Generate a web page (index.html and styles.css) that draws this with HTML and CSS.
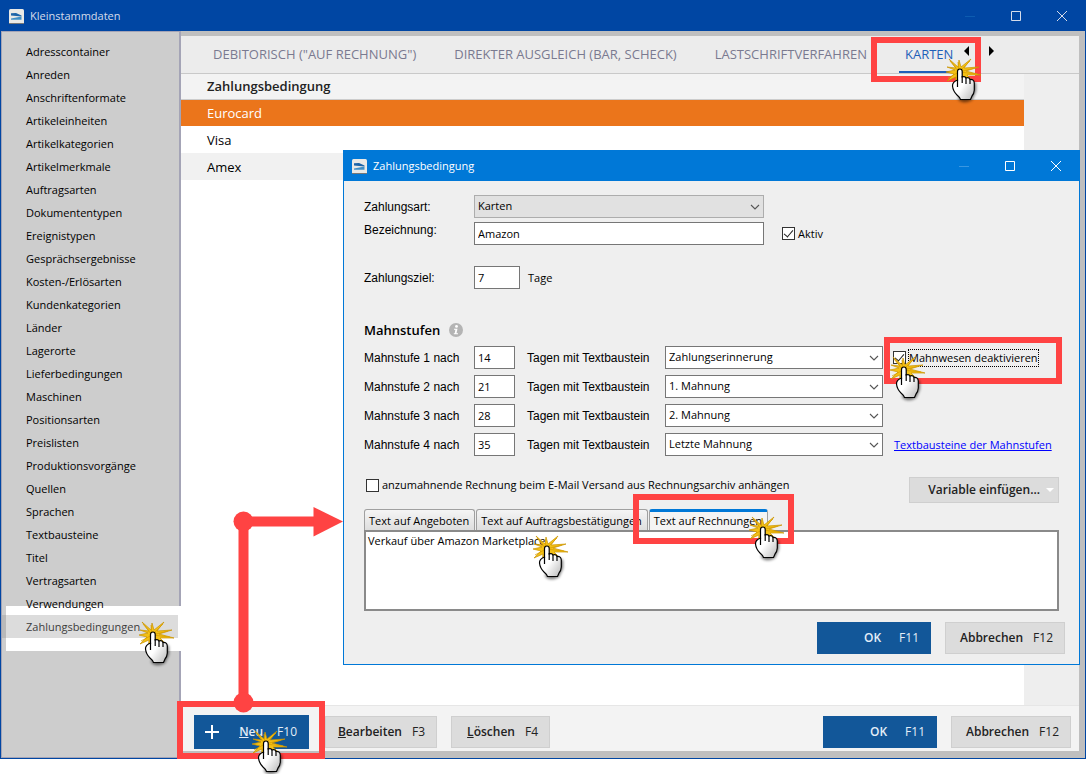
FILE: index.html
```html
<!DOCTYPE html>
<html lang="de">
<head>
<meta charset="utf-8">
<title>Kleinstammdaten</title>
<link rel="stylesheet" href="styles.css">
</head>
<body>
<svg class="defs" aria-hidden="true">
  <defs>
    <linearGradient id="skin" x1="0" y1="0" x2="1" y2="1"><stop offset=".5" stop-color="#fff"/><stop offset="1" stop-color="#b8b8b8"/></linearGradient>
    <filter id="soft" x="-30%" y="-30%" width="160%" height="170%"><feGaussianBlur stdDeviation="1.5"/></filter>
    <symbol id="logo" viewBox="0 0 15 15"><rect width="15" height="15" rx="1.5" fill="#e9e9e6"/><path d="M2 4.200l5-.2 5.500 2.500v1L2 6.500z" fill="#1c64a8"/><path d="M2 9.500l10.500-2v3.200H2z" fill="#3f8fc6"/><path d="M0 14.500h15" stroke="#777"/></symbol>
    <symbol id="chev" viewBox="0 0 10 6"><path d="M1 1l4 4 4-4" fill="none" stroke="#555" stroke-width="1.100"/></symbol>
    <g id="click">
      <path d="M12 41Q17 47 26 42L30 33V25L20 22z" fill="#000" opacity=".55" filter="url(#soft)"/>
      <path d="M3 1L12 9 13 2 15 9 25 1 18 10 33 9 20 13 35 17 21 17 26 22 14 17 9 28 10 19 1 23 8 16 0 14 9 12 1 9 10 10z" fill="#f3c016" stroke="#c99200" stroke-width=".7"/>
      <path d="M4 3l9 11L24 3M2 20l11-6 18 2M12 4l1 10 16-4" fill="none" stroke="#d9a000" stroke-width=".8"/>
      <path d="M11.500 23V13.500Q11.500 11 14 11Q16.200 11 16.200 13.500V19Q19 18 20 20Q23 19 24 21.500Q28 21 28.300 25V32Q28 36 26 38L24.500 41.500H14.500Q13.500 39 11 37Q7 33 6.500 28Q6.300 24 11.500 22z" fill="url(#skin)" stroke="#000" stroke-width="1.200"/>
      <path d="M11.500 22v7M16.200 18v7M20 20v6M24 21.500V26" fill="none" stroke="#000" stroke-width="1.200"/>
    </g>
  </defs>
</svg>
<div class="window">
  <header class="titlebar">
    <svg class="logo"><use href="#logo"/></svg><h1>Kleinstammdaten</h1>
    <div class="controls">
      <button type="button" aria-label="Minimieren" disabled><svg viewBox="0 0 10 10"><path d="M0 5.500h10"/></svg></button>
      <button type="button" aria-label="Maximieren"><svg viewBox="0 0 10 10"><path d="M.5.5h9v9h-9z"/></svg></button>
      <button type="button" aria-label="Schließen"><svg viewBox="0 0 10 10"><path d="M0 0l10 10M10 0L0 10"/></svg></button>
    </div>
  </header>
  <div class="body">
    <nav class="sidebar">
      <ul>
        <li>Adresscontainer</li><li>Anreden</li><li>Anschriftenformate</li><li>Artikeleinheiten</li><li>Artikelkategorien</li><li>Artikelmerkmale</li><li>Auftragsarten</li><li>Dokumententypen</li><li>Ereignistypen</li><li>Gesprächsergebnisse</li><li>Kosten-/Erlösarten</li><li>Kundenkategorien</li><li>Länder</li><li>Lagerorte</li><li>Lieferbedingungen</li><li>Maschinen</li><li>Positionsarten</li><li>Preislisten</li><li>Produktionsvorgänge</li><li>Quellen</li><li>Sprachen</li><li>Textbausteine</li><li>Titel</li><li>Vertragsarten</li><li>Verwendungen</li><li class="selected">Zahlungsbedingungen</li>
      </ul>
    </nav>
    <main class="content">
      <div class="tabs" role="tablist">
        <button type="button" role="tab">DEBITORISCH ("AUF RECHNUNG")</button>
        <button type="button" role="tab">DIREKTER AUSGLEICH (BAR, SCHECK)</button>
        <button type="button" role="tab">LASTSCHRIFTVERFAHREN</button>
        <button type="button" role="tab" class="active" aria-selected="true">KARTEN</button>
        <div class="arrows">
          <button type="button" aria-label="Zurück"><svg viewBox="0 0 5 10"><path d="M5 0v10L0 5z"/></svg></button>
          <button type="button" aria-label="Weiter"><svg viewBox="0 0 5 10"><path d="M0 0v10l5-5z"/></svg></button>
        </div>
      </div>
      <div class="list">
        <table>
          <thead><tr><th>Zahlungsbedingung</th></tr></thead>
          <tbody><tr class="current"><td>Eurocard</td></tr><tr><td>Visa</td></tr><tr class="alt"><td>Amex</td></tr></tbody>
        </table>
      </div>
      <footer class="actions">
        <button type="button" class="btn primary new"><svg viewBox="0 0 14 14"><path d="M7 0v14M0 7h14"/></svg><b><u>N</u>eu</b><span>F10</span></button>
        <button type="button" class="btn edit"><b><u>B</u>earbeiten</b><span>F3</span></button>
        <button type="button" class="btn delete"><b><u>L</u>öschen</b><span>F4</span></button>
        <button type="button" class="btn primary ok"><b>OK</b><span>F11</span></button>
        <button type="button" class="btn cancel"><b>Abbrechen</b><span>F12</span></button>
      </footer>
    </main>
  </div>

  <section class="dialog" role="dialog" aria-labelledby="dlg-title">
    <header class="titlebar">
      <svg class="logo"><use href="#logo"/></svg><h2 id="dlg-title">Zahlungsbedingung</h2>
      <div class="controls">
        <button type="button" aria-label="Minimieren" disabled><svg viewBox="0 0 10 10"><path d="M0 5.500h10"/></svg></button>
        <button type="button" aria-label="Maximieren"><svg viewBox="0 0 10 10"><path d="M.5.5h9v9h-9z"/></svg></button>
        <button type="button" aria-label="Schließen"><svg viewBox="0 0 10 10"><path d="M0 0l10 10M10 0L0 10"/></svg></button>
      </div>
    </header>
    <form>
      <div class="fields">
        <label for="art">Zahlungsart:</label>
        <span class="drop gray"><select id="art"><option>Karten</option></select><svg><use href="#chev"/></svg></span>
        <span></span>
        <label for="bez" class="top">Bezeichnung:</label>
        <input class="box" id="bez" type="text" value="Amazon">
        <label class="check"><input type="checkbox" checked><span>Aktiv</span></label>
      </div>
      <div class="target"><label for="ziel">Zahlungsziel:</label><input class="box" id="ziel" type="text" value="7"><span>Tage</span></div>
      <h3>Mahnstufen <svg viewBox="0 0 14 14" aria-hidden="true"><circle cx="7" cy="7" r="7" fill="#b4b4b4"/><circle cx="7.500" cy="3.400" r="1.400" fill="#fff"/><path d="M5 5.800h3.500l-1 4.500H9v1H4.800v-1h.9l.7-3.500H5z" fill="#fff"/></svg></h3>
      <div class="levels">
        <label for="t1">Mahnstufe 1 nach</label><input class="box" id="t1" type="text" value="14"><label for="s1">Tagen mit Textbaustein</label>
        <span class="drop"><select id="s1"><option>Zahlungserinnerung</option></select><svg><use href="#chev"/></svg></span>
        <label class="check focus"><input type="checkbox" checked><span>Mahnwesen deaktivieren</span></label>
        <label for="t2">Mahnstufe 2 nach</label><input class="box" id="t2" type="text" value="21"><label for="s2">Tagen mit Textbaustein</label>
        <span class="drop"><select id="s2"><option>1. Mahnung</option></select><svg><use href="#chev"/></svg></span>
        <span></span>
        <label for="t3">Mahnstufe 3 nach</label><input class="box" id="t3" type="text" value="28"><label for="s3">Tagen mit Textbaustein</label>
        <span class="drop"><select id="s3"><option>2. Mahnung</option></select><svg><use href="#chev"/></svg></span>
        <span></span>
        <label for="t4">Mahnstufe 4 nach</label><input class="box" id="t4" type="text" value="35"><label for="s4">Tagen mit Textbaustein</label>
        <span class="drop"><select id="s4"><option>Letzte Mahnung</option></select><svg><use href="#chev"/></svg></span>
        <a href="#textbausteine">Textbausteine der Mahnstufen</a>
      </div>
      <div class="attach">
        <label class="check"><input type="checkbox"><span>anzumahnende Rechnung beim E-Mail Versand aus Rechnungsarchiv anhängen</span></label>
        <button type="button" class="btn variable"><b>Variable einfügen...</b><svg viewBox="0 0 8 4"><path d="M0 0h8L4 4z"/></svg></button>
      </div>
      <div class="texttabs" role="tablist">
        <button type="button" role="tab">Text auf Angeboten</button><button type="button" role="tab">Text auf Auftragsbestätigungen</button><button type="button" role="tab" class="active" aria-selected="true">Text auf Rechnungen</button>
      </div>
      <textarea aria-label="Text auf Rechnungen">Verkauf über Amazon Marketplace</textarea>
      <div class="confirm">
        <button type="button" class="btn primary ok"><b>OK</b><span>F11</span></button>
        <button type="button" class="btn cancel"><b>Abbrechen</b><span>F12</span></button>
      </div>
    </form>
  </section>

  <svg class="marks" width="1086" height="774" viewBox="0 0 1086 774" aria-hidden="true">
    <g fill="none" stroke="#ff4343" stroke-width="6">
      <rect x="874" y="40" width="104" height="39"/>
      <rect x="887" y="340" width="172" height="41"/>
      <rect x="636" y="497" width="155" height="44"/>
      <rect x="180" y="704" width="142" height="52"/>
      <path d="M243.500 703V521.500H315" stroke-width="10"/>
    </g>
    <g fill="#ff4343"><circle cx="243.500" cy="521.500" r="10"/><circle cx="243.500" cy="702.500" r="10"/><path d="M313.500 507v29.500L343 521.500z"/></g>
    <use href="#click" x="946" y="58"/><use href="#click" x="890" y="356"/><use href="#click" x="533" y="535"/><use href="#click" x="749" y="516"/><use href="#click" x="139" y="621"/><use href="#click" x="252" y="730"/>
  </svg>
</div>
</body>
</html>
```
FILE: styles.css
```css
* { box-sizing: border-box; }
body { min-height: 100vh; margin: 0; background: #fff; color: #000; font: 11px/16px "Open Sans", "Noto Sans", sans-serif; }
button, input, select, textarea { font: inherit; color: inherit; margin: 0; border-radius: 0; }
button { border: 0; background: none; padding: 0; }
.defs { position: absolute; width: 0; height: 0; }

.window { position: relative; border: 1px solid #0046a3; background: #0046a3; }
.titlebar { display: flex; align-items: center; height: 30px; padding-left: 8px; color: #d5dcea; }
.titlebar h1, .titlebar h2 { margin: 0 0 0 6px; font-size: 11px; font-weight: 400; }
.logo { width: 15px; height: 15px; }
.controls { display: flex; margin-left: auto; }
.controls button { display: flex; align-items: center; justify-content: center; width: 46px; height: 30px; }
.controls svg { width: 10px; height: 10px; overflow: visible; }
.controls path { fill: none; stroke: #d5dcea; stroke-width: 1; }
.controls button:disabled path { stroke: #0d5cb0; }

.body { display: flex; background: #bfbfbf; }
.sidebar { flex: none; width: 180px; padding-top: 8px; background: #cdcdcd; border: 1px solid #a4a4b6; border-width: 1px 2px 1px 1px; }
.sidebar ul { margin: 0; padding: 0; list-style: none; }
.sidebar li { position: relative; z-index: 1; height: 23px; padding-left: 24px; line-height: 23px; white-space: nowrap; }
.sidebar .selected { z-index: 0; margin-right: 1px; background: #b9b9b9; color: #3c3c3c; }
.sidebar .selected::before { content: ""; position: absolute; z-index: -2; left: 4px; right: -4px; top: -9px; bottom: -13px; background: #fff; }
.sidebar .selected::after { content: ""; position: absolute; z-index: -1; inset: 0 0 0 4px; background: #dcdcdc; }

.content { flex: 1; min-width: 0; display: flex; flex-direction: column; margin: 5px 6px 7px 0; background: #eee; }
.tabs { display: flex; height: 38px; padding-left: 26px; border-bottom: 1px solid #c9c9c9; background: #ececec; font-size: 13px; }
.tabs > button { padding: 0 6px; margin-right: 26px; color: #7a7a90; white-space: nowrap; border-bottom: 2px solid transparent; }
.tabs > .active { margin: 0 5px 0 0; color: #1f5fb8; border-color: #1f5fb8; }
.arrows { display: flex; align-items: center; gap: 20px; padding-bottom: 8px; }
.arrows button { display: flex; }
.arrows svg { width: 5px; height: 10px; }
.list { height: 631px; margin-right: 55px; background: #fff; }
table { width: 100%; border-collapse: collapse; font-size: 13px; }
th, td { height: 27px; padding: 0 26px; text-align: left; font-weight: 400; }
th { height: 25px; background: #f3f3f3; border-bottom: 1px solid #ccc; color: #222; font-weight: 600; }
.current { background: #eb751b; color: #fff; }
.alt { background: #f1f1f1; }

.actions { display: flex; align-items: center; height: 46px; padding: 7px 8px 0 13px; background: #f3f3f3; border-top: 1px solid #e6e6e6; }
.btn { display: flex; align-items: center; justify-content: flex-end; gap: 10px; height: 32px; padding: 0 11px; border: 1px solid #cfcfcf; background: #dcdcdc; color: #222; font-size: 12px; white-space: nowrap; }
.btn b { font-weight: 600; }
.primary { background: #125799; border-color: #125799; color: #e4eef8; }
.new { width: 115px; height: 34px; padding-left: 10px; gap: 14px; }
.new svg { width: 14px; height: 14px; margin-right: auto; }
.new path { stroke: #fff; stroke-width: 2; }
.edit { width: 112px; margin-left: 16px; }
.delete { width: 99px; margin: 0 auto 0 14px; }
.ok { width: 114px; gap: 18px; }
.cancel { width: 120px; margin-left: 14px; }

.dialog { position: absolute; left: 342px; right: 5px; top: 149px; border: 1px solid #0078d7; background: #efefef; }
.dialog .titlebar { background: #0078d7; color: #fff; }
.dialog .controls path { stroke: #fff; }
.dialog .controls button:disabled path { stroke: #3997e2; }
form { padding: 14px 20px 10px; }
.fields, .levels { display: grid; align-items: center; }
.fields { grid-template-columns: 110px 290px 1fr; row-gap: 4px; }
.fields > label, .target label, .levels > label { font-family: "Liberation Sans", sans-serif; font-size: 12px; }
.fields .check, .levels .check { font-family: inherit; font-size: 11px; }
.fields .top { align-self: start; }
.box, .drop { height: 23px; border: 1px solid #767676; background: #fff; }
.box { width: 100%; padding: 0 3px 1px; }
.drop { position: relative; }
.drop select { width: 100%; height: 21px; padding: 0 20px 1px 3px; border: 0; background: none; appearance: none; }
.drop svg { position: absolute; right: 3px; top: 8px; width: 10px; height: 6px; pointer-events: none; }
.gray { border-color: #adadad; background: #e1e1e1; }
.check { display: inline-flex; align-items: center; gap: 3px; white-space: nowrap; }
.check input { position: relative; flex: none; width: 13px; height: 13px; appearance: none; border: 1px solid #333; background: #fff; }
.check input:checked::after { content: ""; position: absolute; left: 3px; top: 0; width: 4px; height: 8px; border: solid #222; border-width: 0 1px 1px 0; transform: rotate(40deg); }
.fields .check { margin-left: 18px; }
.focus span { outline: 1px dotted #000; }
.target { display: flex; align-items: center; margin-top: 21px; }
.target label { width: 110px; }
.target .box { width: 46px; margin-right: 8px; }
h3 { display: flex; align-items: center; gap: 9px; margin: 33px 0 8px; font-size: 13px; line-height: 16px; font-weight: 600; }
h3 svg { width: 14px; height: 14px; }
.levels { grid-template-columns: 110px 41px 150px 218px 1fr; row-gap: 6px; }
.levels > label[for^="s"] { padding-left: 12px; }
.levels .check { margin-left: 10px; }
.levels a { margin-left: 11px; color: #00f; white-space: nowrap; }
.attach { display: flex; align-items: flex-start; justify-content: space-between; margin-top: 21px; padding-left: 2px; }
.attach .btn { height: 26px; width: 150px; padding: 0 4px; gap: 6px; }
.attach .btn svg { width: 8px; height: 4px; fill: #fff; }
.texttabs { display: flex; gap: 1px; height: 21px; margin-top: 6px; }
.texttabs button { padding: 2px 5px 0 4px; border: 1px solid #a0a0a0; border-bottom: 0; border-radius: 3px 3px 0 0; background: linear-gradient(#f5f5f5, #dedede); white-space: nowrap; }
.texttabs .active { padding-top: 0; border-top: 3px solid #0078d7; background: #f4f4f4; }
textarea { display: block; width: 100%; height: 81px; padding: 1px 2px; border: 2px solid #8a8a8a; background: #fff; resize: none; }
.confirm { display: flex; justify-content: flex-end; margin: 11px -6px 0 0; }
.marks { position: absolute; left: -1px; top: -1px; z-index: 5; pointer-events: none; }
```
